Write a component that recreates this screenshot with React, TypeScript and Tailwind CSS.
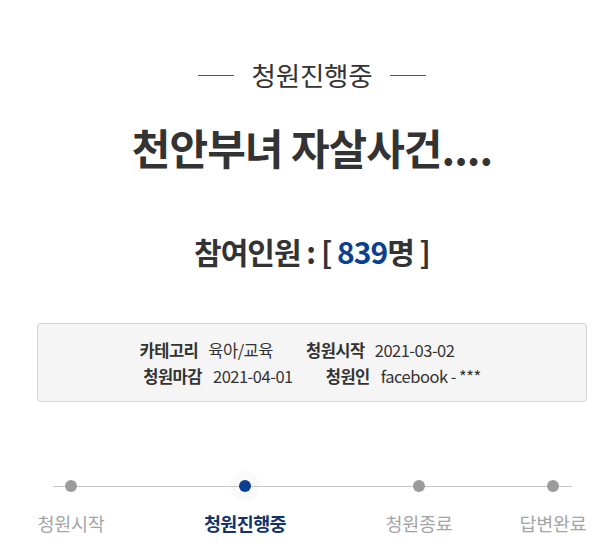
import React from "react";

const steps = [
  { label: "청원시작", active: false },
  { label: "청원진행중", active: true },
  { label: "청원종료", active: false },
  { label: "답변완료", active: false },
];

const Dot = ({ active }: { active: boolean }) => (
  <span
    className={
      active
        ? "w-[12px] h-[12px] rounded-full bg-[#0b3f91] shrink-0 shadow-[0_0_0_9px_rgba(0,0,0,0.02)]"
        : "w-[12px] h-[12px] rounded-full bg-[#9b9b9b] shrink-0"
    }
  />
);

const Seg = ({ w }: { w: string }) => <span className={`h-px bg-[#c8c8c8] ${w}`} />;

export default function App() {
  return (
    <div className="w-[616px] h-[548px] bg-white pl-[8px] font-['Noto_Sans_CJK_KR','Noto_Sans',sans-serif] text-[#333] overflow-hidden">
      <div className="flex flex-col items-center">
        <div className="flex items-center gap-[18px] mt-[58px] h-[34px]">
          <span className="w-[36px] h-px bg-[#555]" />
          <h3 className="text-[26.5px] leading-[34px] tracking-[-0.2px]">청원진행중</h3>
          <span className="w-[36px] h-px bg-[#555]" />
        </div>
        <h2 className="mt-[30px] text-[42px] leading-[50px] font-bold tracking-[-1px]">천안부녀 자살사건....</h2>
        <h2 className="mt-[59px] text-[30px] leading-[40px] font-bold tracking-[-1px]">
          참여인원 : [ <span className="text-[#0b3f91]">839</span>명 ]
        </h2>
      </div>

      <div className="mt-[52px] ml-[29px] mr-[29px] h-[79px] border border-[#d6d6d6] rounded-[4px] bg-[#f5f5f5] flex flex-col justify-center gap-[4px] text-[16.5px] leading-[22px] tracking-[-0.5px]">
        <div className="flex justify-center pr-[30px]">
          <b className="font-bold">카테고리</b>
          <span className="ml-[10px]">육아/교육</span>
          <b className="font-bold ml-[33px]">청원시작</b>
          <span className="ml-[10px]">2021-03-02</span>
        </div>
        <div className="flex justify-center">
          <b className="font-bold">청원마감</b>
          <span className="ml-[11px]">2021-04-01</span>
          <b className="font-bold ml-[33px]">청원인</b>
          <span className="ml-[11px]">facebook - ***</span>
        </div>
      </div>

      <div className="mt-[78px] ml-[45px] flex items-center h-[12px]">
        <Seg w="w-[12px]" />
        <Dot active={false} />
        <Seg w="w-[162px]" />
        <Dot active={true} />
        <Seg w="w-[162px]" />
        <Dot active={false} />
        <Seg w="w-[122px]" />
        <Dot active={false} />
        <Seg w="w-[13px]" />
      </div>

      <div className="mt-[18px] flex items-center h-[26px] tracking-[-0.3px]">
        {steps.map((s, i) => (
          <span
            key={s.label}
            className={
              (i === 0 ? "ml-[13px] " : i === 3 ? "ml-[34px] " : "ml-[74px] ") +
              "w-[100px] text-center leading-[26px] " +
              (s.active ? "text-[18.5px] font-bold text-[#12336b] tracking-[-0.6px]" : "text-[18.5px] text-[#a5a5a5]")
            }
          >
            {s.label}
          </span>
        ))}
      </div>
    </div>
  );
}
